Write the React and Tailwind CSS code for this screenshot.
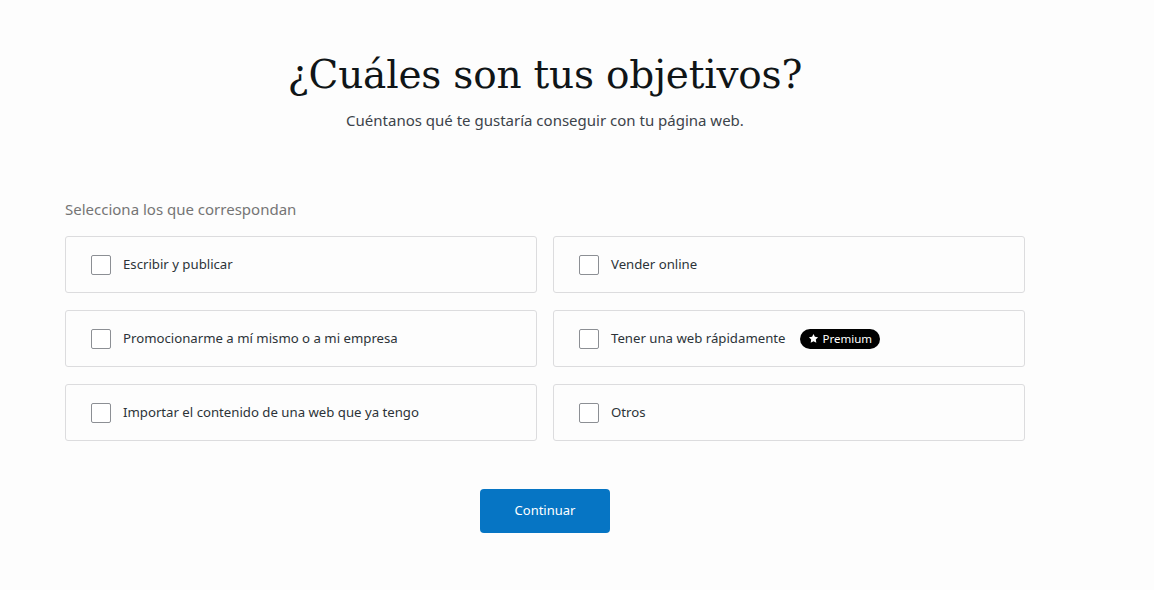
const goals = [
  { id: "write", label: "Escribir y publicar" },
  { id: "sell", label: "Vender online" },
  { id: "promote", label: "Promocionarme a mí mismo o a mi empresa" },
  { id: "fast", label: "Tener una web rápidamente", premium: true },
  { id: "import", label: "Importar el contenido de una web que ya tengo" },
  { id: "other", label: "Otros" },
];

export default function App() {
  return (
    <div
      className="min-h-[590px] w-full bg-[#fdfdfd] text-[#1e1e1e]"
      style={{ fontFamily: '"Noto Sans", "Open Sans", sans-serif' }}
    >
      <div className="w-[960px] ml-[65px] pt-[50px]">
        <h1
          className="text-center text-[39px] leading-[50px] text-[#101517] tracking-[-0.2px]"
          style={{ fontFamily: '"DejaVu Serif", "Liberation Serif", serif', fontWeight: 400 }}
        >
          ¿Cuáles son tus objetivos?
        </h1>
        <p className="text-center text-[15px] leading-[20px] text-[#3c434a] mt-[10px]">
          Cuéntanos qué te gustaría conseguir con tu página web.
        </p>

        <div className="mt-[69px] text-[15px] leading-[20px] text-[#757575]">
          Selecciona los que correspondan
        </div>

        <div className="grid grid-cols-2 gap-x-[16px] gap-y-[17px] mt-[17px]">
          {goals.map((g) => (
            <label
              key={g.id}
              className="h-[57px] flex items-center pl-[25px] bg-[#fdfdfd] border border-[#dcdcde] rounded-[3px] cursor-pointer"
            >
              <span className="w-[20px] h-[20px] border border-[#8c8f94] rounded-[2px] bg-white shrink-0" />
              <span className="ml-[12px] text-[13.2px] text-[#2c3338]">{g.label}</span>
              {g.premium && (
                <span className="ml-[14px] inline-flex items-center gap-[4px] h-[20px] px-[8px] rounded-full bg-black text-white text-[11.5px]">
                  <svg width="11" height="11" viewBox="0 0 24 24" fill="white">
                    <path d="M12 2l3.09 6.26L22 9.27l-5 4.87 1.18 6.88L12 17.77l-6.18 3.25L7 14.14 2 9.27l6.91-1.01L12 2z" />
                  </svg>
                  Premium
                </span>
              )}
            </label>
          ))}
        </div>

        <div className="flex justify-center mt-[48px]">
          <button className="w-[130px] h-[44px] rounded-[4px] bg-[#0675c4] text-white text-[13px]">
            Continuar
          </button>
        </div>
      </div>
    </div>
  );
}
